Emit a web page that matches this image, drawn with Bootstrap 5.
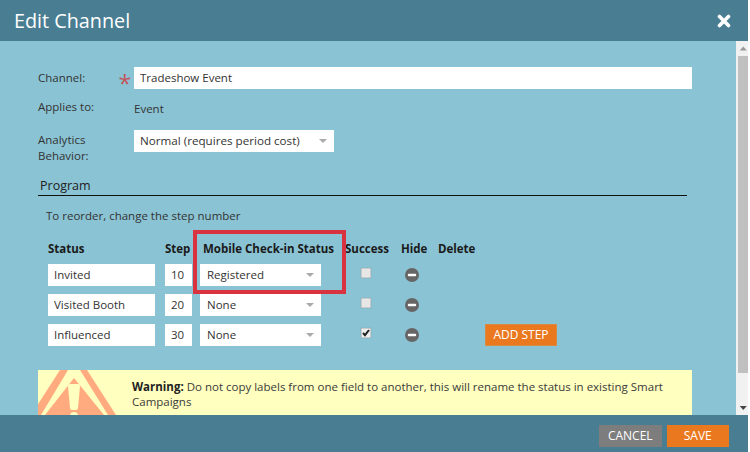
<!DOCTYPE html>
<html lang="en">
<head>
<meta charset="utf-8">
<title>Edit Channel</title>
<link href="https://cdn.jsdelivr.net/npm/bootstrap@5.3.0/dist/css/bootstrap.min.css" rel="stylesheet">
<style>
html,body{height:452px;overflow:hidden;background:#fff;}
body{font-family:"Open Sans",sans-serif;font-size:11.500px;color:#333;}
.dlg{width:748px;height:452px;}
.dlg-head{height:41px;background:#487d92;color:#fff;padding:0 17px 0 14px;}
.dlg-title{font-size:19.800px;margin:0;font-weight:400;line-height:41px;}
.dlg-mid{height:374px;background:#8ac3d4;}
.dlg-scroll{width:697px;padding:25.500px 0 0 38px;overflow:hidden;height:374px;flex:none;}
.sbar{width:12px;margin-left:auto;background:#f1f1f1;padding-left:1.500px;}
.sbar-up,.sbar-down{height:15px;color:#777;}
.sbar-thumb{height:317px;background:#c0c0c0;}
.dlg-foot{height:37px;background:#487d92;padding:10px 19px 0 0;gap:5px;}
.lbl{width:96px;flex:none;line-height:16px;color:#333;}
.fld,.form-control.fld,.form-select.fld{height:22px;min-height:0;border:0;border-radius:0;font-size:11.500px;line-height:22px;padding:0 6px;color:#333;background-color:#fff;box-shadow:none;font-family:inherit;}
.form-select.fld{background-position:right 7px center;background-size:8px 4px;background-image:url("data:image/svg+xml,%3Csvg xmlns='http://www.w3.org/2000/svg' viewBox='0 0 8 4'%3E%3Cpath d='M0 0h8L4 4z' fill='%23aaa'/%3E%3C/svg%3E");}
.form-select.fld.c3{padding-left:7px;}
.form-select.fld.w-mid{font-size:11.650px;}
.row-channel{height:22px;width:654px;margin-bottom:10px;position:relative;}
.row-channel .lbl{padding-top:3px;}
.stardot{position:absolute;left:80.500px;top:3px;color:#c4555c;font-size:23px;line-height:26px;}
.w-long{width:558px;}
.w-mid{width:200px;}
.row-applies{height:22px;margin-bottom:9px;line-height:20px;}
.row-analytics{height:36px;margin-bottom:11px;}
.row-analytics .lbl{padding-top:2px;}
.prog{width:649px;font-size:12.500px;line-height:17px;padding:0 0 1px 2px;border-bottom:1px solid #111;margin-bottom:11px;color:#222;}
.hint{padding-left:8px;line-height:17px;margin-bottom:16px;}
.grid-steps{position:relative;padding-left:10px;}
.hdr{font-weight:700;color:#1a1a1a;height:24px;line-height:17px;}
.hd-mobile{width:145px;padding-left:3px;flex:none;}
.hd-success{width:56px;flex:none;}
.hd-hide{width:37px;flex:none;}
.steprow{height:22px;margin-bottom:8px;}
.c1{width:107px;margin-right:10px;flex:none;}
.c2{width:27px;margin-right:8px;flex:none;}
.c3{width:121px;margin-right:40px;flex:none;}
.c5{width:14px;flex:none;}
.form-check-input.tick{width:10px;height:10px;margin:0 34px 3px 0;flex:none;border:1px solid #ccc;border-radius:1px;background-color:#e6e6e6;box-shadow:0 0 1px #777;}
.form-check-input.tick:checked{background-color:#eee;border-color:#ccc;background-image:url("data:image/svg+xml,%3Csvg xmlns='http://www.w3.org/2000/svg' viewBox='0 0 10 10'%3E%3Cpath d='M2 5l2 2.200L8 2' fill='none' stroke='%23222' stroke-width='2'/%3E%3C/svg%3E");background-size:10px;}
.minus{display:block;width:14px;height:14px;}
.act{border:0;border-radius:0;color:#fff;font-size:12px;height:22px;padding:0;line-height:22px;}
.act-orange,.act-orange:hover{background:#e9781f;color:#fff;}
.act-grey,.act-grey:hover{background:#7d7d7d;color:#fff;}
.act-add{width:72px;margin-left:66px;box-shadow:0 0 0 1px #d88a45 inset;}
.act-foot{width:62.500px;}
.hl{position:absolute;left:155px;top:-10px;width:153px;height:64px;border:4px solid #d9333f;pointer-events:none;}
.warnbox{width:654px;height:60px;margin-top:24px;background:#ffffc0;flex:none;color:#3a3a3a;line-height:15px;}
.warnart{width:94px;height:45px;flex:none;display:block;}
.warntext{padding-top:9px;width:550px;}
.warntext strong{color:#222;}
.xbtn{width:14px;height:14px;display:block;}
</style>
</head>
<body>
<div class="dlg d-flex flex-column">
  <div class="dlg-head d-flex align-items-center justify-content-between">
    <h1 class="dlg-title">Edit Channel</h1>
    <svg class="xbtn" viewBox="0 0 14 14" aria-label="Close"><path d="M2.500 2.500l9 9M11.500 2.500l-9 9" stroke="#fff" stroke-width="3.600" stroke-linecap="round" fill="none"/></svg>
  </div>
  <div class="dlg-mid d-flex">
    <div class="dlg-scroll">
      <div class="row-channel d-flex align-items-start">
        <div class="lbl">Channel:</div>
        <span class="stardot">*</span>
        <input class="form-control fld w-long" value="Tradeshow Event">
      </div>
      <div class="row-applies d-flex">
        <div class="lbl">Applies to:</div>
        <div>Event</div>
      </div>
      <div class="row-analytics d-flex align-items-start">
        <div class="lbl">Analytics Behavior:</div>
        <select class="form-select fld w-mid"><option>Normal (requires period cost)</option></select>
      </div>
      <div class="prog">Program</div>
      <div class="hint">To reorder, change the step number</div>
      <div class="grid-steps">
        <div class="hdr d-flex">
          <div class="c1">Status</div>
          <div class="c2 text-nowrap">Step</div>
          <div class="hd-mobile text-nowrap">Mobile Check-in Status</div>
          <div class="hd-success text-nowrap">Success</div>
          <div class="hd-hide text-nowrap">Hide</div>
          <div class="text-nowrap">Delete</div>
        </div>
        <div class="steprow d-flex align-items-center">
          <input class="form-control fld c1" value="Invited">
          <input class="form-control fld c2" value="10">
          <select class="form-select fld c3"><option>Registered</option></select>
          <input class="form-check-input tick" type="checkbox">
          <svg class="minus c5" viewBox="0 0 14 14"><circle cx="7" cy="7" r="7" fill="#666"/><rect x="2.800" y="5.800" width="8.400" height="2.400" rx="1" fill="#fff"/></svg>
        </div>
        <div class="steprow d-flex align-items-center">
          <input class="form-control fld c1" value="Visited Booth">
          <input class="form-control fld c2" value="20">
          <select class="form-select fld c3"><option>None</option></select>
          <input class="form-check-input tick" type="checkbox">
          <svg class="minus c5" viewBox="0 0 14 14"><circle cx="7" cy="7" r="7" fill="#666"/><rect x="2.800" y="5.800" width="8.400" height="2.400" rx="1" fill="#fff"/></svg>
        </div>
        <div class="steprow d-flex align-items-center">
          <input class="form-control fld c1" value="Influenced">
          <input class="form-control fld c2" value="30">
          <select class="form-select fld c3"><option>None</option></select>
          <input class="form-check-input tick" type="checkbox" checked>
          <svg class="minus c5" viewBox="0 0 14 14"><circle cx="7" cy="7" r="7" fill="#666"/><rect x="2.800" y="5.800" width="8.400" height="2.400" rx="1" fill="#fff"/></svg>
          <button type="button" class="btn act act-orange act-add">ADD STEP</button>
        </div>
        <div class="hl"></div>
      </div>
      <div class="warnbox d-flex">
        <svg class="warnart" viewBox="0 0 94 45">
          <path d="M22 0h27l29 45H-7z" fill="#ffab7f"/>
          <path d="M30 0h12l28 45H3z" fill="#ffffc0"/>
          <path d="M36 8l30 37H7z" fill="#ffab7f"/>
          <path d="M30 16q0-2 2-2h8q2 0 2 2l-2 22q0 2-2 2h-4q-2 0-2-2z" fill="#ffffc0"/>
          <circle cx="36" cy="46" r="4" fill="#ffffc0"/>
        </svg>
        <div class="warntext"><strong>Warning:</strong> Do not copy labels from one field to another, this will rename the status in existing Smart Campaigns</div>
      </div>
    </div>
    <div class="sbar d-flex flex-column">
      <svg class="sbar-up" viewBox="0 0 10 15"><path d="M1.500 9.500h7L5 5.500z" fill="#999"/></svg>
      <div class="sbar-thumb"></div>
      <div class="flex-grow-1"></div>
      <svg class="sbar-down" viewBox="0 0 10 15"><path d="M1.500 6h7L5 10z" fill="#444"/></svg>
    </div>
  </div>
  <div class="dlg-foot d-flex justify-content-end align-items-start">
    <button type="button" class="btn act act-grey act-foot">CANCEL</button>
    <button type="button" class="btn act act-orange act-foot">SAVE</button>
  </div>
</div>
<script src="https://cdn.jsdelivr.net/npm/bootstrap@5.3.0/dist/js/bootstrap.bundle.min.js"></script>
</body>
</html>
